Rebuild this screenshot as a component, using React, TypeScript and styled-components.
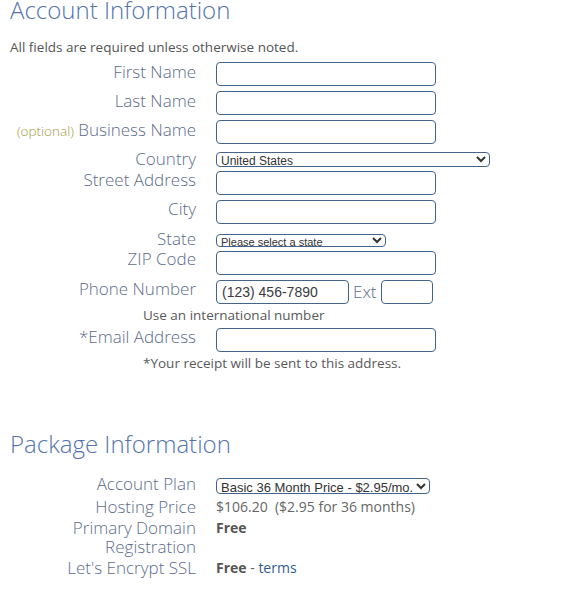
import React from "react";
import styled, { createGlobalStyle } from "styled-components";

const GlobalStyle = createGlobalStyle`
  html, body {
    margin: 0;
    padding: 0;
    background: #ffffff;
  }
  body {
    font-family: "Open Sans", "Noto Sans", sans-serif;
  }
`;

const Page = styled.div`
  width: 562px;
  height: 589px;
  overflow: hidden;
  padding-left: 10px;
  box-sizing: border-box;
`;

const SectionTitle = styled.h2<{ $mt?: number }>`
  margin: ${(p) => p.$mt ?? 0}px 0 0;
  font-size: 24px;
  font-weight: 300;
  line-height: 20px;
  color: #5474ad;
`;

const Note = styled.p`
  margin: 18px 0 0;
  font-size: 13.5px;
  line-height: 18px;
  color: #555555;
`;

const Form = styled.div`
  display: flex;
  flex-direction: column;
`;

const Row = styled.div<{ $mt?: number }>`
  display: grid;
  grid-template-columns: 186px auto;
  column-gap: 20px;
  align-items: start;
  margin-top: ${(p) => p.$mt ?? 5}px;
`;

const Label = styled.label<{ $lh?: number }>`
  text-align: right;
  font-size: 17px;
  line-height: ${(p) => p.$lh ?? 20}px;
  font-weight: 300;
  color: #5d6c8c;
  white-space: nowrap;
`;

const Optional = styled.span`
  color: #9c9a3c;
  font-size: 13.5px;
`;

const Field = styled.div<{ $pt?: number }>`
  display: flex;
  align-items: center;
  gap: 4px;
  padding-top: ${(p) => p.$pt ?? 0}px;
`;

const TextInput = styled.input<{ $w?: number }>`
  box-sizing: border-box;
  width: ${(p) => p.$w ?? 220}px;
  height: 24px;
  margin: 0;
  padding: 0 5px;
  border: 1px solid #45648a;
  border-radius: 4px;
  font-family: "Liberation Sans", Arial, sans-serif;
  font-size: 14px;
  color: #333333;
  background: #ffffff;
  &::placeholder {
    color: #3a3a3a;
  }
`;

const Select = styled.select<{ $w: number; $h?: number; $fs?: number }>`
  box-sizing: border-box;
  width: ${(p) => p.$w}px;
  height: ${(p) => p.$h ?? 15}px;
  margin: 0;
  padding: 0;
  border: 1px solid #45648a;
  border-radius: 4px;
  font-family: "Liberation Sans", Arial, sans-serif;
  font-size: ${(p) => p.$fs ?? 12}px;
  line-height: 1;
  color: #333333;
  background: #ffffff;
`;

const InlineLabel = styled.span`
  font-size: 17px;
  line-height: 20px;
  font-weight: 300;
  color: #5d6c8c;
`;

const Hint = styled.div<{ $mt?: number }>`
  margin-top: ${(p) => p.$mt ?? 0}px;
  padding-left: 133px;
  font-size: 13.5px;
  line-height: 20px;
  color: #595959;
`;

const Value = styled.div`
  font-size: 14px;
  line-height: 20px;
  color: #666666;
`;

const Strong = styled.b`
  font-weight: 700;
  color: #555555;
`;

const TermsLink = styled.a`
  color: #2f5d8c;
  text-decoration: none;
`;

const nameRows: { label: React.ReactNode; mt: number }[] = [
  { label: "First Name", mt: 6 },
  { label: "Last Name", mt: 5 },
  {
    label: (
      <>
        <Optional>(optional)</Optional> Business Name
      </>
    ),
    mt: 5,
  },
];

export default function App() {
  return (
    <Page>
      <GlobalStyle />
      <SectionTitle>Account Information</SectionTitle>
      <Note>All fields are required unless otherwise noted.</Note>
      <Form>
        {nameRows.map((r, i) => (
          <Row key={i} $mt={r.mt}>
            <Label>{r.label}</Label>
            <Field>
              <TextInput type="text" />
            </Field>
          </Row>
        ))}
        <Row $mt={5}>
          <Label>Country</Label>
          <Field $pt={3}>
            <Select $w={274} defaultValue="US">
              <option value="US">United States</option>
            </Select>
          </Field>
        </Row>
        <Row $mt={1}>
          <Label>Street Address</Label>
          <Field $pt={1}>
            <TextInput type="text" />
          </Field>
        </Row>
        <Row $mt={4}>
          <Label>City</Label>
          <Field $pt={1}>
            <TextInput type="text" />
          </Field>
        </Row>
        <Row $mt={5}>
          <Label>State</Label>
          <Field $pt={5}>
            <Select $w={170} $h={13} $fs={11} defaultValue="">
              <option value="">Please select a state</option>
            </Select>
          </Field>
        </Row>
        <Row $mt={0}>
          <Label>ZIP Code</Label>
          <Field $pt={2}>
            <TextInput type="text" />
          </Field>
        </Row>
        <Row $mt={4}>
          <Label>Phone Number</Label>
          <Field $pt={1}>
            <TextInput type="text" $w={133} placeholder="(123) 456-7890" />
            <InlineLabel>Ext</InlineLabel>
            <TextInput type="text" $w={52} />
          </Field>
        </Row>
        <Hint $mt={1}>Use an international number</Hint>
        <Row $mt={2}>
          <Label>*Email Address</Label>
          <Field $pt={1}>
            <TextInput type="email" />
          </Field>
        </Row>
        <Hint $mt={1}>*Your receipt will be sent to this address.</Hint>
      </Form>

      <SectionTitle $mt={61}>Package Information</SectionTitle>
      <Form>
        <Row $mt={20}>
          <Label>Account Plan</Label>
          <Field $pt={4}>
            <Select $w={214} $h={16} $fs={13} defaultValue="36">
              <option value="36">Basic 36 Month Price - $2.95/mo.</option>
            </Select>
          </Field>
        </Row>
        <Row $mt={3}>
          <Label>Hosting Price</Label>
          <Value>$106.20&nbsp; ($2.95 for 36 months)</Value>
        </Row>
        <Row $mt={1}>
          <Label $lh={19}>
            Primary Domain
            <br />
            Registration
          </Label>
          <Value>
            <Strong>Free</Strong>
          </Value>
        </Row>
        <Row $mt={2}>
          <Label>Let's Encrypt SSL</Label>
          <Value>
            <Strong>Free</Strong> - <TermsLink href="#">terms</TermsLink>
          </Value>
        </Row>
      </Form>
    </Page>
  );
}
